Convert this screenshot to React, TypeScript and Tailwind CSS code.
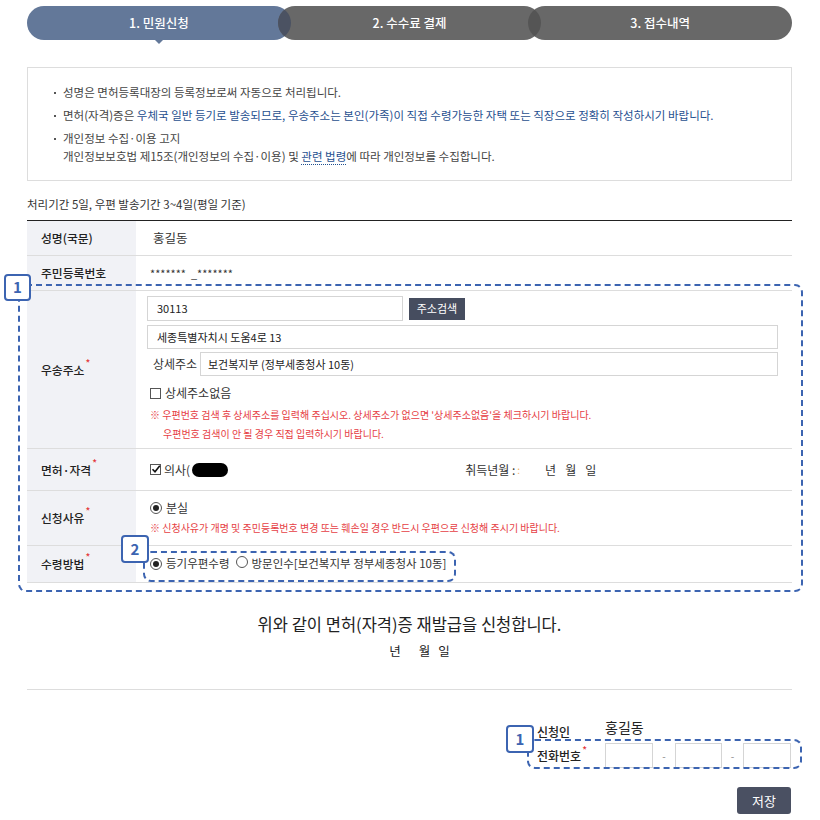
import React from "react";

const Star = () => (
  <span className="relative -top-[7px] ml-[1px] text-[10px] leading-none text-[#e4393c]">*</span>
);

const Check = ({ checked }: { checked?: boolean }) => (
  <span className="relative inline-flex h-[11px] w-[11px] shrink-0 items-center justify-center border border-[#555] bg-white">
    {checked && (
      <svg width="10" height="10" viewBox="0 0 10 10" className="absolute left-[0px] top-[-1px]">
        <path d="M1.5 5.2 L4 7.8 L8.8 1.8" fill="none" stroke="#111" strokeWidth="1.6" />
      </svg>
    )}
  </span>
);

const Radio = ({ checked }: { checked?: boolean }) => (
  <span className="inline-flex h-[12px] w-[12px] shrink-0 items-center justify-center rounded-full border border-[#555] bg-white">
    {checked && <span className="h-[6px] w-[6px] rounded-full bg-[#222]" />}
  </span>
);

const Label = ({ children, star }: { children: React.ReactNode; star?: boolean }) => (
  <div className="flex w-[109px] shrink-0 items-center bg-[#f1f2f6] pl-[14px] text-[11.8px] font-medium text-[#222]">
    <span>{children}</span>
    {star && <Star />}
  </div>
);

export default function App() {
  return (
    <div className="relative min-h-[820px] w-[820px] bg-white font-['Noto_Sans_CJK_KR','Noto_Sans',sans-serif] text-[#333]">
      <div className="ml-[27px] w-[765px] pt-[6px]">
        {/* Steps */}
        <div className="flex">
          <div className="relative flex h-[34px] w-[264px] items-center justify-center rounded-full bg-[#637899] text-[12.5px] font-medium text-white">
            1. 민원신청
            <span className="absolute left-1/2 top-full -translate-x-1/2 border-x-[4px] border-t-[4px] border-x-transparent border-t-[#637899]" />
          </div>
          <div className="relative -ml-[13px] flex h-[34px] w-[264px] items-center justify-center overflow-hidden rounded-full bg-[#686868] text-[12.5px] font-medium text-white">
            <span className="absolute left-[-21px] top-0 h-[34px] w-[34px] rounded-full bg-[#4b5262]" />
            <span className="relative">2. 수수료 결제</span>
          </div>
          <div className="relative -ml-[13px] flex h-[34px] w-[264px] items-center justify-center overflow-hidden rounded-full bg-[#686868] text-[12.5px] font-medium text-white">
            <span className="absolute left-[-21px] top-0 h-[34px] w-[34px] rounded-full bg-[#555555]" />
            <span className="relative">3. 접수내역</span>
          </div>
        </div>

        {/* Info box */}
        <div className="mt-[27px] border border-[#dddddd] px-[26px] py-[15px] text-[11.5px] leading-[18px] text-[#444]">
          <ul className="flex flex-col gap-[5px]">
            <li className="relative pl-[9px]">
              <span className="absolute left-0 top-[9px] h-[2px] w-[2px] bg-[#555]" />
              성명은 면허등록대장의 등록정보로써 자동으로 처리됩니다.
            </li>
            <li className="relative pl-[9px]">
              <span className="absolute left-0 top-[9px] h-[2px] w-[2px] bg-[#555]" />
              면허(자격)증은{" "}
              <span className="text-[#1f4f8f]">
                우체국 일반 등기로 발송되므로, 우송주소는 본인(가족)이 직접 수령가능한 자택 또는 직장으로 정확히 작성하시기 바랍니다.
              </span>
            </li>
            <li className="relative pl-[9px]">
              <span className="absolute left-0 top-[9px] h-[2px] w-[2px] bg-[#555]" />
              개인정보 수집·이용 고지
              <br />
              개인정보보호법 제15조(개인정보의 수집·이용) 및{" "}
              <span className="border-b border-dotted border-[#1f4f8f] text-[#1f4f8f]">관련 법령</span>에 따라 개인정보를 수집합니다.
            </li>
          </ul>
        </div>

        <div className="mt-[14px] text-[11.5px] leading-[18px] text-[#333]">처리기간 5일, 우편 발송기간 3~4일(평일 기준)</div>

        {/* Table */}
        <div className="mt-[7px] border-t border-[#222]">
          <div className="flex h-[35px] border-b border-[#dddddd]">
            <Label>성명(국문)</Label>
            <div className="flex items-center pl-[17px] text-[12.5px] text-[#333]">홍길동</div>
          </div>
          <div className="flex h-[35px] border-b border-[#dddddd]">
            <Label>주민등록번호</Label>
            <div className="flex items-center pl-[14px] text-[11px] text-[#333]">*******&nbsp;&nbsp;_*******</div>
          </div>
          <div className="flex h-[158px] border-b border-[#dddddd]">
            <Label star>우송주소</Label>
            <div className="flex flex-1 flex-col pl-[11px] pr-[14px] pt-[5px]">
              <div className="flex items-center gap-[6px]">
                <div className="flex h-[25px] w-[256px] items-center border border-[#d5d5d5] pl-[9px] text-[11px] text-[#222]">30113</div>
                <div className="flex h-[22px] w-[56px] items-center justify-center bg-[#464d5f] text-[11px] text-white">주소검색</div>
              </div>
              <div className="mt-[4px] flex h-[24px] items-center border border-[#d5d5d5] pl-[9px] text-[11px] text-[#222]">세종특별자치시 도움4로 13</div>
              <div className="mt-[3px] flex items-center">
                <span className="w-[53px] pl-[6px] text-[12px] text-[#333]">상세주소</span>
                <div className="flex h-[24px] flex-1 items-center border border-[#d5d5d5] pl-[7px] text-[11px] text-[#222]">보건복지부 (정부세종청사 10동)</div>
              </div>
              <div className="mt-[8px] flex items-center gap-[4px] pl-[3px] text-[12px] text-[#333]">
                <Check />
                <span>상세주소없음</span>
              </div>
              <div className="mt-[3px] pl-[3px] text-[10px] leading-[19px] text-[#e63e44]">
                <div>※ 우편번호 검색 후 상세주소를 입력해 주십시오. 상세주소가 없으면 '상세주소없음'을 체크하시기 바랍니다.</div>
                <div className="pl-[13px]">우편번호 검색이 안 될 경우 직접 입력하시기 바랍니다.</div>
              </div>
            </div>
          </div>
          <div className="flex h-[42px] border-b border-[#dddddd]">
            <Label star>면허·자격</Label>
            <div className="flex flex-1 items-center pl-[14px] text-[12px] text-[#333]">
              <Check checked />
              <span className="ml-[3px]">의사(</span>
              <span className="ml-[2px] h-[14px] w-[36px] rounded-[7px] bg-black" />
              <span className="ml-[237px]">취득년월 :</span>
              <span className="ml-[2px] text-[10px] text-[#f0b060]">:</span>
              <span className="ml-[25px]">년</span>
              <span className="ml-[9px]">월</span>
              <span className="ml-[9px]">일</span>
            </div>
          </div>
          <div className="flex h-[55px] border-b border-[#dddddd]">
            <Label star>신청사유</Label>
            <div className="flex flex-1 flex-col justify-center pl-[14px]">
              <div className="flex items-center gap-[4px] text-[12px] text-[#333]">
                <Radio checked />
                <span>분실</span>
              </div>
              <div className="mt-[2px] text-[10px] leading-[18px] text-[#e63e44]">
                ※ 신청사유가 개명 및 주민등록번호 변경 또는 훼손일 경우 반드시 우편으로 신청해 주시기 바랍니다.
              </div>
            </div>
          </div>
          <div className="flex h-[37px] border-b border-[#dddddd]">
            <Label star>수령방법</Label>
            <div className="flex flex-1 items-center pl-[14px] text-[11.5px] text-[#333]">
              <Radio checked />
              <span className="ml-[4px]">등기우편수령</span>
              <span className="ml-[7px]">
                <Radio />
              </span>
              <span className="ml-[3px]">방문인수[보건복지부 정부세종청사 10동]</span>
            </div>
          </div>
        </div>

        {/* Confirmation */}
        <div className="mt-[29px] text-center text-[16.5px] leading-[24px] text-[#222]">위와 같이 면허(자격)증 재발급을 신청합니다.</div>
        <div className="mt-[5px] flex justify-center gap-[8px] pl-[20px] text-[12.5px] leading-[20px] text-[#222]">
          <span>년</span>
          <span className="ml-[10px]">월</span>
          <span>일</span>
        </div>
        <div className="mt-[28px] border-t border-[#dddddd]" />

        {/* Applicant */}
        <div className="mt-[32px] flex justify-end">
          <div className="flex w-[255px] flex-col">
            <div className="flex items-end">
              <span className="w-[68px] text-[12px] font-medium leading-[16px] text-[#222]">신청인</span>
              <span className="relative -top-[4px] text-[14px] leading-[18px] text-[#222]">홍길동</span>
            </div>
            <div className="mt-[3px] flex items-center">
              <span className="w-[68px] text-[12px] font-medium text-[#222]">
                전화번호
                <Star />
              </span>
              <span className="h-[25px] w-[48px] border border-[#d5d5d5]" />
              <span className="w-[22px] text-center text-[10px] text-[#888]">-</span>
              <span className="h-[25px] w-[47px] border border-[#d5d5d5]" />
              <span className="w-[21px] text-center text-[10px] text-[#888]">-</span>
              <span className="h-[25px] w-[48px] border border-[#d5d5d5]" />
            </div>
          </div>
        </div>
        <div className="mt-[19px] flex justify-end pr-[1px]">
          <div className="flex h-[27px] w-[54px] items-center justify-center rounded-[3px] bg-[#4a5062] text-[13px] text-white">저장</div>
        </div>
      </div>

      {/* Annotations */}
      <div className="pointer-events-none absolute left-[18px] top-[284px] h-[308px] w-[785px] rounded-[8px] border-2 border-dashed border-[#3c64b1]" />
      <div className="pointer-events-none absolute left-[4px] top-[274px] flex h-[27px] w-[27px] items-center justify-center rounded-[4px] border-2 border-[#3c64b1] bg-white text-[15px] font-bold text-[#3c64b1]">1</div>

      <div className="pointer-events-none absolute left-[143px] top-[551px] h-[31px] w-[313px] rounded-[8px] border-2 border-dashed border-[#3c64b1]" />
      <div className="pointer-events-none absolute left-[121px] top-[535px] flex h-[28px] w-[28px] items-center justify-center rounded-[4px] border-2 border-[#3c64b1] bg-white text-[15px] font-bold text-[#3c64b1]">2</div>

      <div className="pointer-events-none absolute left-[527px] top-[739px] h-[30px] w-[275px] rounded-[8px] border-2 border-dashed border-[#3c64b1]" />
      <div className="pointer-events-none absolute left-[506px] top-[725px] flex h-[28px] w-[28px] items-center justify-center rounded-[4px] border-2 border-[#3c64b1] bg-white text-[15px] font-bold text-[#3c64b1]">1</div>
    </div>
  );
}
